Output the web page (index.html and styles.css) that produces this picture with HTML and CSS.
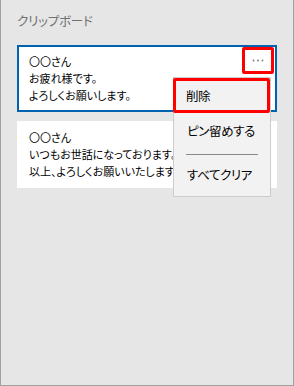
FILE: index.html
```html
<!DOCTYPE html>
<html lang="ja">
<head>
<meta charset="utf-8">
<link rel="stylesheet" href="styles.css">
</head>
<body>
<div class="panel">
  <div class="title">クリップボード</div>
  <div class="list">
    <div class="card selected">
      <div class="line">〇〇さん</div>
      <div class="line">お疲れ様です。</div>
      <div class="line">よろしくお願いします。</div>
      <div class="more">
        <svg width="12" height="3" viewBox="0 0 12 3"><circle cx="1.5" cy="1.5" r="0.9" fill="#7a7a7a"/><circle cx="6" cy="1.5" r="0.9" fill="#7a7a7a"/><circle cx="10.5" cy="1.5" r="0.9" fill="#7a7a7a"/></svg>
      </div>
      <div class="menu">
        <div class="item hl">削除</div>
        <div class="item">ピン留めする</div>
        <div class="sep"></div>
        <div class="item">すべてクリア</div>
      </div>
    </div>
    <div class="card">
      <div class="line">〇〇さん</div>
      <div class="line">いつもお世話になっております。</div>
      <div class="line">以上、よろしくお願いいたします。</div>
    </div>
  </div>
</div>
</body>
</html>
```
FILE: styles.css
```css
html, body {
  margin: 0;
  padding: 0;
}
body {
  font-family: "Noto Sans CJK JP", "Noto Sans", sans-serif;
  font-feature-settings: "palt";
}
.panel {
  box-sizing: border-box;
  width: 294px;
  height: 386px;
  background: #e6e6e6;
  border: 1px solid #a0a0a0;
  border-top: none;
  padding: 0 16px 0 16px;
}
.title {
  font-size: 12.5px;
  letter-spacing: -0.2px;
  color: #707070;
  line-height: 20px;
  padding-top: 11px;
  height: 45px;
  box-sizing: border-box;
}
.list {
  display: flex;
  flex-direction: column;
  gap: 9px;
}
.card {
  position: relative;
  background: #fff;
  border: 2px solid #fff;
  padding: 6px 10px;
  font-size: 11px;
  line-height: 17px;
  color: #000;
  white-space: nowrap;
  overflow: visible;
}
.card.selected {
  border-color: #0063b1;
}
.more {
  position: absolute;
  top: 0;
  right: 1px;
  width: 32px;
  height: 27px;
  box-sizing: border-box;
  border: 3px solid #ff0000;
  border-radius: 2px;
  display: flex;
  align-items: center;
  justify-content: center;
}
.menu {
  position: absolute;
  top: 30px;
  left: 154px;
  width: 98px;
  box-sizing: border-box;
  background: #f2f2f2;
  border: 1px solid #cccccc;
  padding-bottom: 4px;
  z-index: 5;
  font-size: 12.5px;
  letter-spacing: -0.4px;
  color: #000;
}
.item {
  height: 35px;
  line-height: 35px;
  padding-left: 13px;
  box-sizing: border-box;
}
.item.hl {
  border: 3px solid #ff0000;
  border-radius: 2px;
  line-height: 29px;
  padding-left: 10px;
  margin: 0 0 0 -1px;
  width: 97px;
}
.sep {
  height: 1px;
  background: #8a8a8a;
  margin: 6px 12px 2px 12px;
}
```
